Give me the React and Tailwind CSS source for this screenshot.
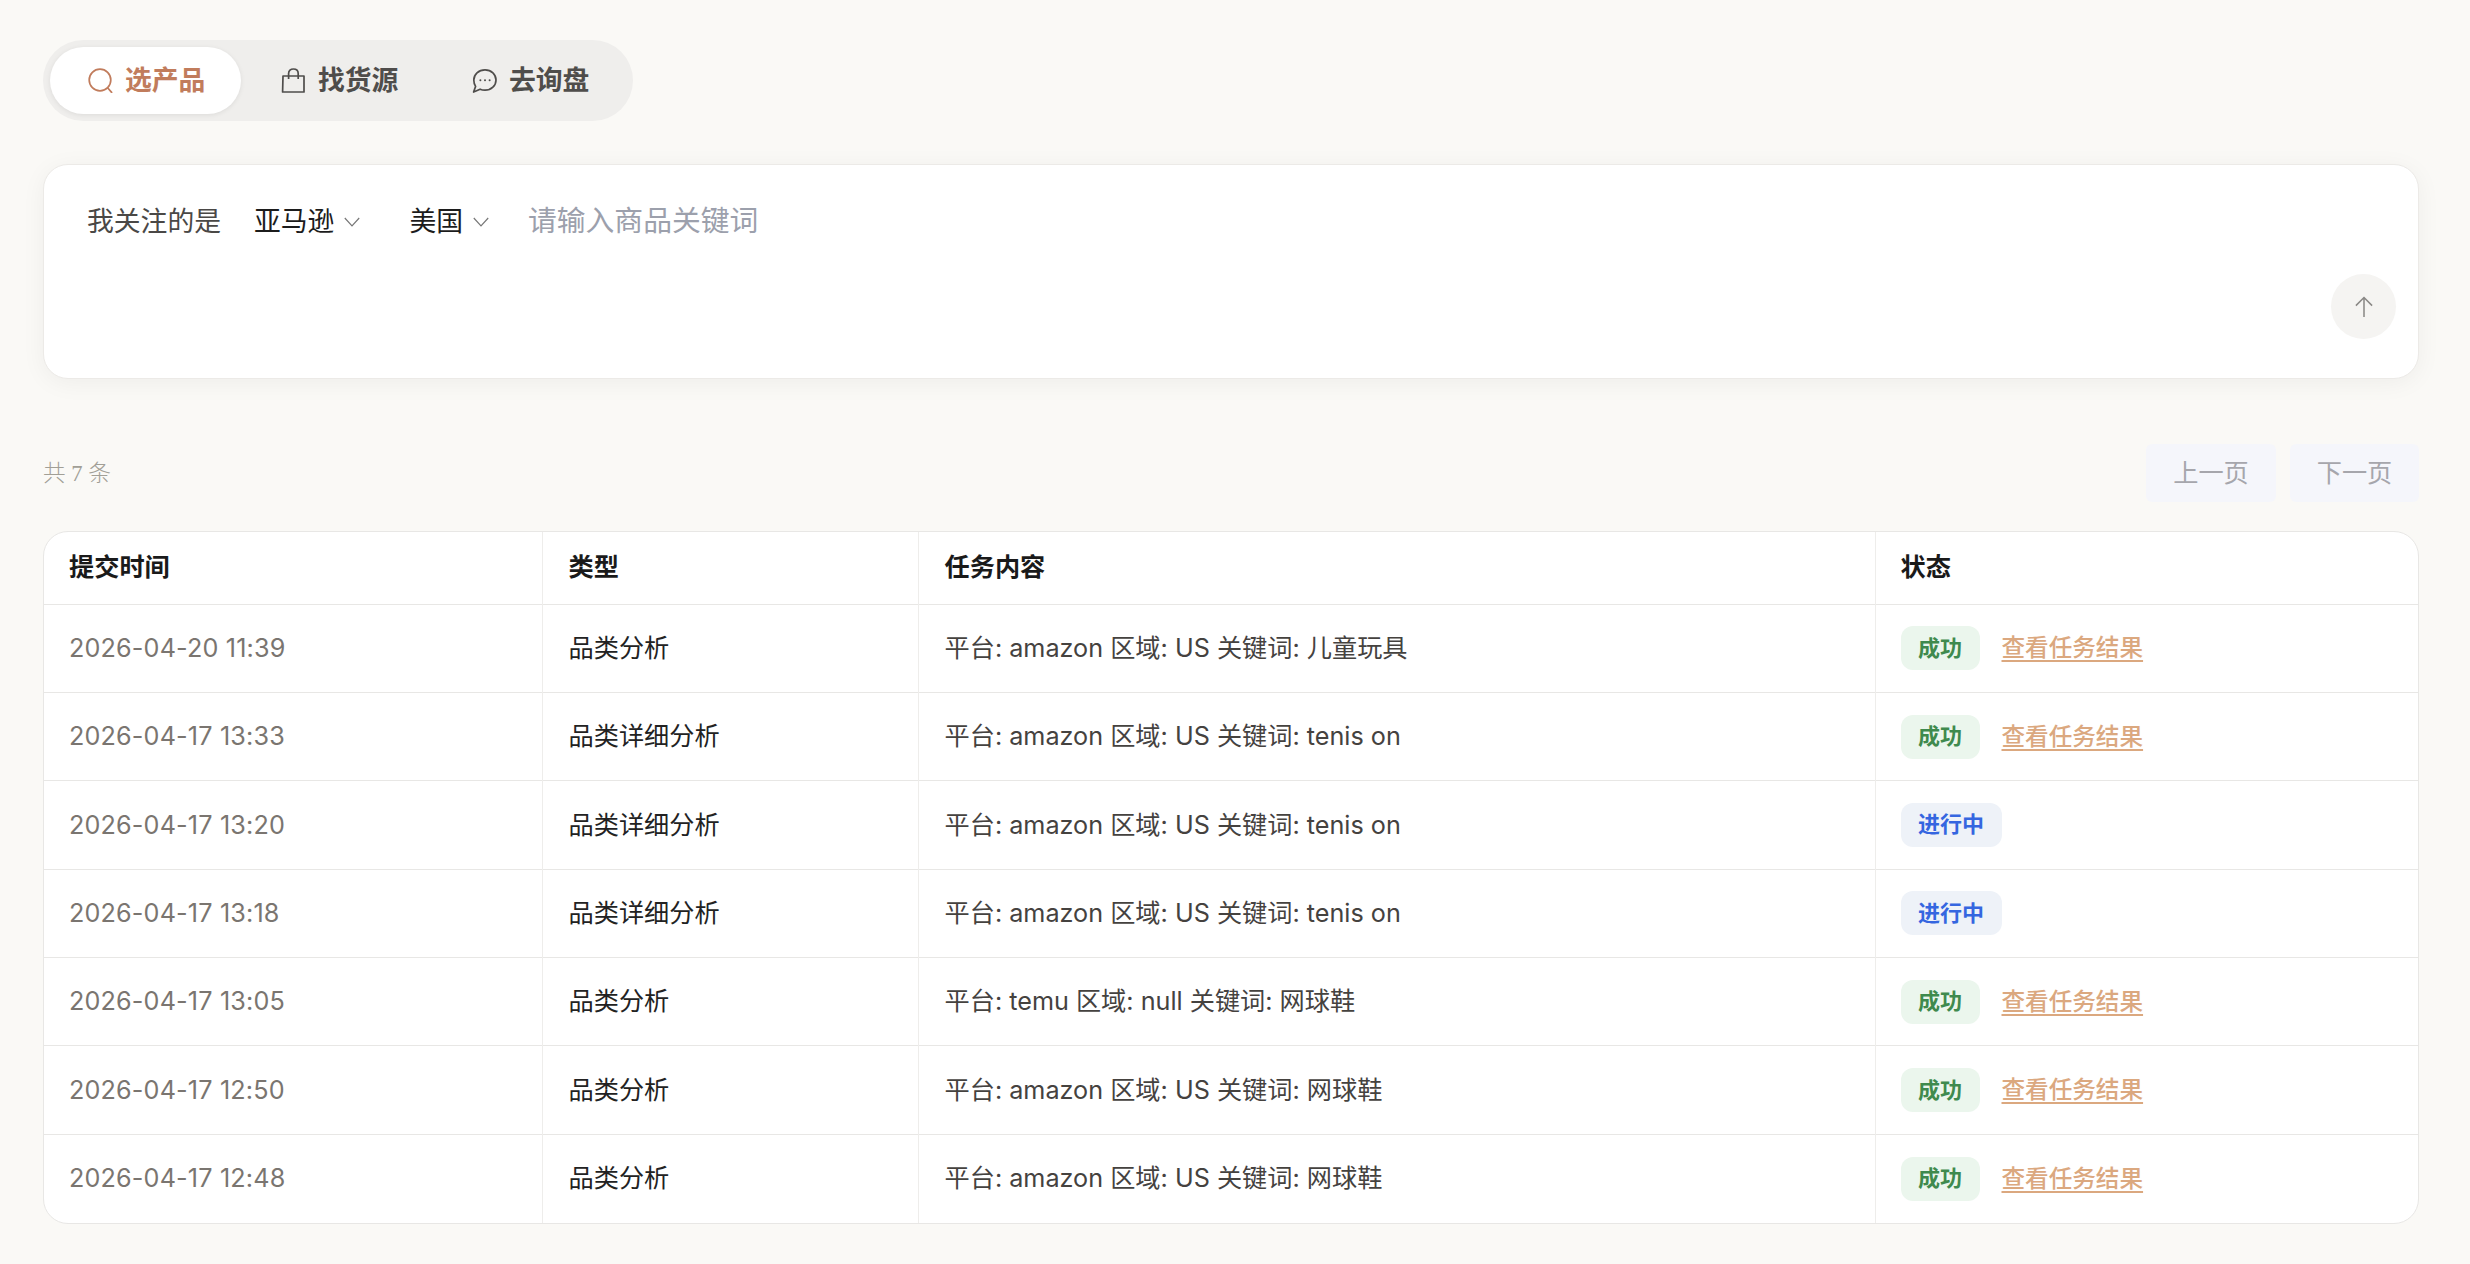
const rows = [
  ['2026-04-20 11:39', '品类分析', '平台: amazon 区域: US 关键词: 儿童玩具', 'ok'],
  ['2026-04-17 13:33', '品类详细分析', '平台: amazon 区域: US 关键词: tenis on', 'ok'],
  ['2026-04-17 13:20', '品类详细分析', '平台: amazon 区域: US 关键词: tenis on', 'run'],
  ['2026-04-17 13:18', '品类详细分析', '平台: amazon 区域: US 关键词: tenis on', 'run'],
  ['2026-04-17 13:05', '品类分析', '平台: temu 区域: null 关键词: 网球鞋', 'ok'],
  ['2026-04-17 12:50', '品类分析', '平台: amazon 区域: US 关键词: 网球鞋', 'ok'],
  ['2026-04-17 12:48', '品类分析', '平台: amazon 区域: US 关键词: 网球鞋', 'ok'],
];

function SearchIcon() {
  return (
    <svg viewBox="0 0 25 25" className="w-[25px] h-[25px]" fill="none" stroke="currentColor" strokeWidth="1.7" strokeLinecap="round">
      <circle cx="12" cy="12" r="10.8" />
      <path d="M19.8 20 L23.6 24.4" />
    </svg>
  );
}
function BagIcon() {
  return (
    <svg viewBox="0 0 25 25" className="w-[25px] h-[25px]" fill="none" stroke="currentColor" strokeWidth="1.7" strokeLinejoin="round">
      <path d="M2 8 H23 V24 H1.6 Z" />
      <path d="M7.6 11 V5.5 C7.6 2.6 9.6 1 12.4 1 C15.2 1 17.2 2.6 17.2 5.5 V11" />
    </svg>
  );
}
function ChatIcon() {
  return (
    <svg viewBox="0 0 25 25" className="w-[25px] h-[25px]" fill="none" stroke="currentColor" strokeWidth="1.7" strokeLinejoin="round">
      <path d="M13 1.8 C19.4 1.8 24 6.3 24 12 C24 17.7 19.4 22.2 13 22.2 C11.2 22.2 9.6 21.9 8.1 21.2 L1.6 24 L3.6 18.4 C2.4 16.6 1.8 14.4 1.8 12 C1.8 6.3 6.6 1.8 13 1.8 Z" />
      <circle cx="8.4" cy="12.2" r="1" fill="currentColor" stroke="none" />
      <circle cx="13" cy="12.2" r="1" fill="currentColor" stroke="none" />
      <circle cx="17.6" cy="12.2" r="1" fill="currentColor" stroke="none" />
    </svg>
  );
}
function Chevron() {
  return (
    <svg viewBox="0 0 16 10" className="w-[16px] h-[10px] text-[#777777]" fill="none" stroke="currentColor" strokeWidth="1.2">
      <path d="M0.8 1 L8 8.8 L15.2 1" />
    </svg>
  );
}

function Tab({ icon, label, active }) {
  return (
    <div className={active
      ? "flex items-center gap-[12px] w-[191px] h-[67px] pl-[38px] rounded-full bg-white text-[#c17c5c] shadow-[0_1px_5px_rgba(0,0,0,0.08)]"
      : "flex items-center gap-[12px] w-[191px] h-[67px] pl-[40px] rounded-full text-[#4f4d4b]"}>
      {icon}
      <span className="text-[26.8px] font-semibold leading-none">{label}</span>
    </div>
  );
}

function Badge({ kind }) {
  return kind === 'ok'
    ? <span className="inline-flex items-center justify-center w-[79px] h-[44px] rounded-[12px] bg-[#ebf6ed] text-[#3f8a4e] text-[22px] font-semibold">成功</span>
    : <span className="inline-flex items-center justify-center w-[101px] h-[44px] rounded-[12px] bg-[#eef2f8] text-[#3566e0] text-[22px] font-semibold">进行中</span>;
}

export default function App() {
  return (
    <div className="min-h-screen bg-[#faf9f6] pt-[40px] pl-[43px] pr-[51px] font-['Inter','Noto_Sans_CJK_SC',sans-serif]">
      <div className="flex w-fit p-[7px] pr-[10px] rounded-full bg-[#efeeec] h-[81px]">
        <Tab active icon={<SearchIcon />} label="选产品" />
        <Tab icon={<BagIcon />} label="找货源" />
        <Tab icon={<ChatIcon />} label="去询盘" />
      </div>

      <div className="mt-[43px] h-[215px] flex flex-col rounded-[25px] bg-white border border-[#eceae7] shadow-[0_4px_24px_rgba(0,0,0,0.05)] pl-[43px] pr-[22px] pt-[35px] pb-[39px]">
        <div className="flex items-center h-[42px]">
          <span className="text-[26.8px] text-[#4a4846]">我关注的是</span>
          <span className="ml-[33px] text-[26.8px] text-[#1c1c1c]">亚马逊</span>
          <span className="ml-[10px] pt-[2px]"><Chevron /></span>
          <span className="ml-[49px] text-[26.8px] text-[#1c1c1c]">美国</span>
          <span className="ml-[10px] pt-[2px]"><Chevron /></span>
          <span className="ml-[39px] text-[28.8px] text-[#9ca0ac]">请输入商品关键词</span>
        </div>
        <div className="mt-auto self-end w-[65px] h-[65px] rounded-full bg-[#f5f4f2] flex items-center justify-center text-[#8a8886]">
          <svg viewBox="0 0 20 24" className="w-[18px] h-[22px]" fill="none" stroke="currentColor" strokeWidth="1.7">
            <path d="M10 23 V1.5 M1 10.5 L10 1.5 L19 10.5" />
          </svg>
        </div>
      </div>

      <div className="mt-[65px] flex items-center justify-between h-[58px]">
        <span className="pt-[2px] text-[22.6px] text-[#a19f96] font-light font-['Liberation_Serif','Noto_Sans_CJK_SC',serif]">共 7 条</span>
        <div className="flex gap-[14px]">
          <div className="w-[130px] h-[58px] pt-[2px] rounded-[6px] bg-[#f5f6fb] text-[#a6a6ac] text-[25.2px] flex items-center justify-center">上一页</div>
          <div className="w-[129px] h-[58px] pt-[2px] rounded-[6px] bg-[#f5f6fb] text-[#a6a6ac] text-[25.2px] flex items-center justify-center">下一页</div>
        </div>
      </div>

      <div className="mt-[29px] rounded-[25px] bg-white border border-[#e8e7e5] overflow-hidden">
        <table className="w-full table-fixed border-collapse text-[25.2px]">
          <colgroup>
            <col className="w-[498px]" />
            <col className="w-[376px]" />
            <col className="w-[957px]" />
            <col />
          </colgroup>
          <thead>
            <tr className="h-[72px] text-left text-[#1a1a1a]">
              <th className="pl-[25px] font-semibold border-r border-[#eeedeb]">提交时间</th>
              <th className="pl-[26px] font-semibold border-r border-[#eeedeb]">类型</th>
              <th className="pl-[26px] font-semibold border-r border-[#eeedeb]">任务内容</th>
              <th className="pl-[25px] font-semibold">状态</th>
            </tr>
          </thead>
          <tbody>
            {rows.map((r, i) => (
              <tr key={i} className="h-[88.4px] border-t border-[#e8e7e5]">
                <td className="pl-[25px] pt-[1px] tracking-[0.16px] text-[#7a7570] border-r border-[#eeedeb]">{r[0]}</td>
                <td className="pl-[26px] pt-[1px] text-[#222222] border-r border-[#eeedeb]">{r[1]}</td>
                <td className="pl-[26px] pt-[1px] text-[#45423f] border-r border-[#eeedeb]">{r[2]}</td>
                <td className="pl-[25px]">
                  <div className="flex items-center gap-[22px]">
                    <Badge kind={r[3]} />
                    {r[3] === 'ok' && (
                      <a className="text-[23.6px] font-medium text-[#dba87f] underline decoration-[2px] underline-offset-[4px]">查看任务结果</a>
                    )}
                  </div>
                </td>
              </tr>
            ))}
          </tbody>
        </table>
      </div>
    </div>
  );
}
